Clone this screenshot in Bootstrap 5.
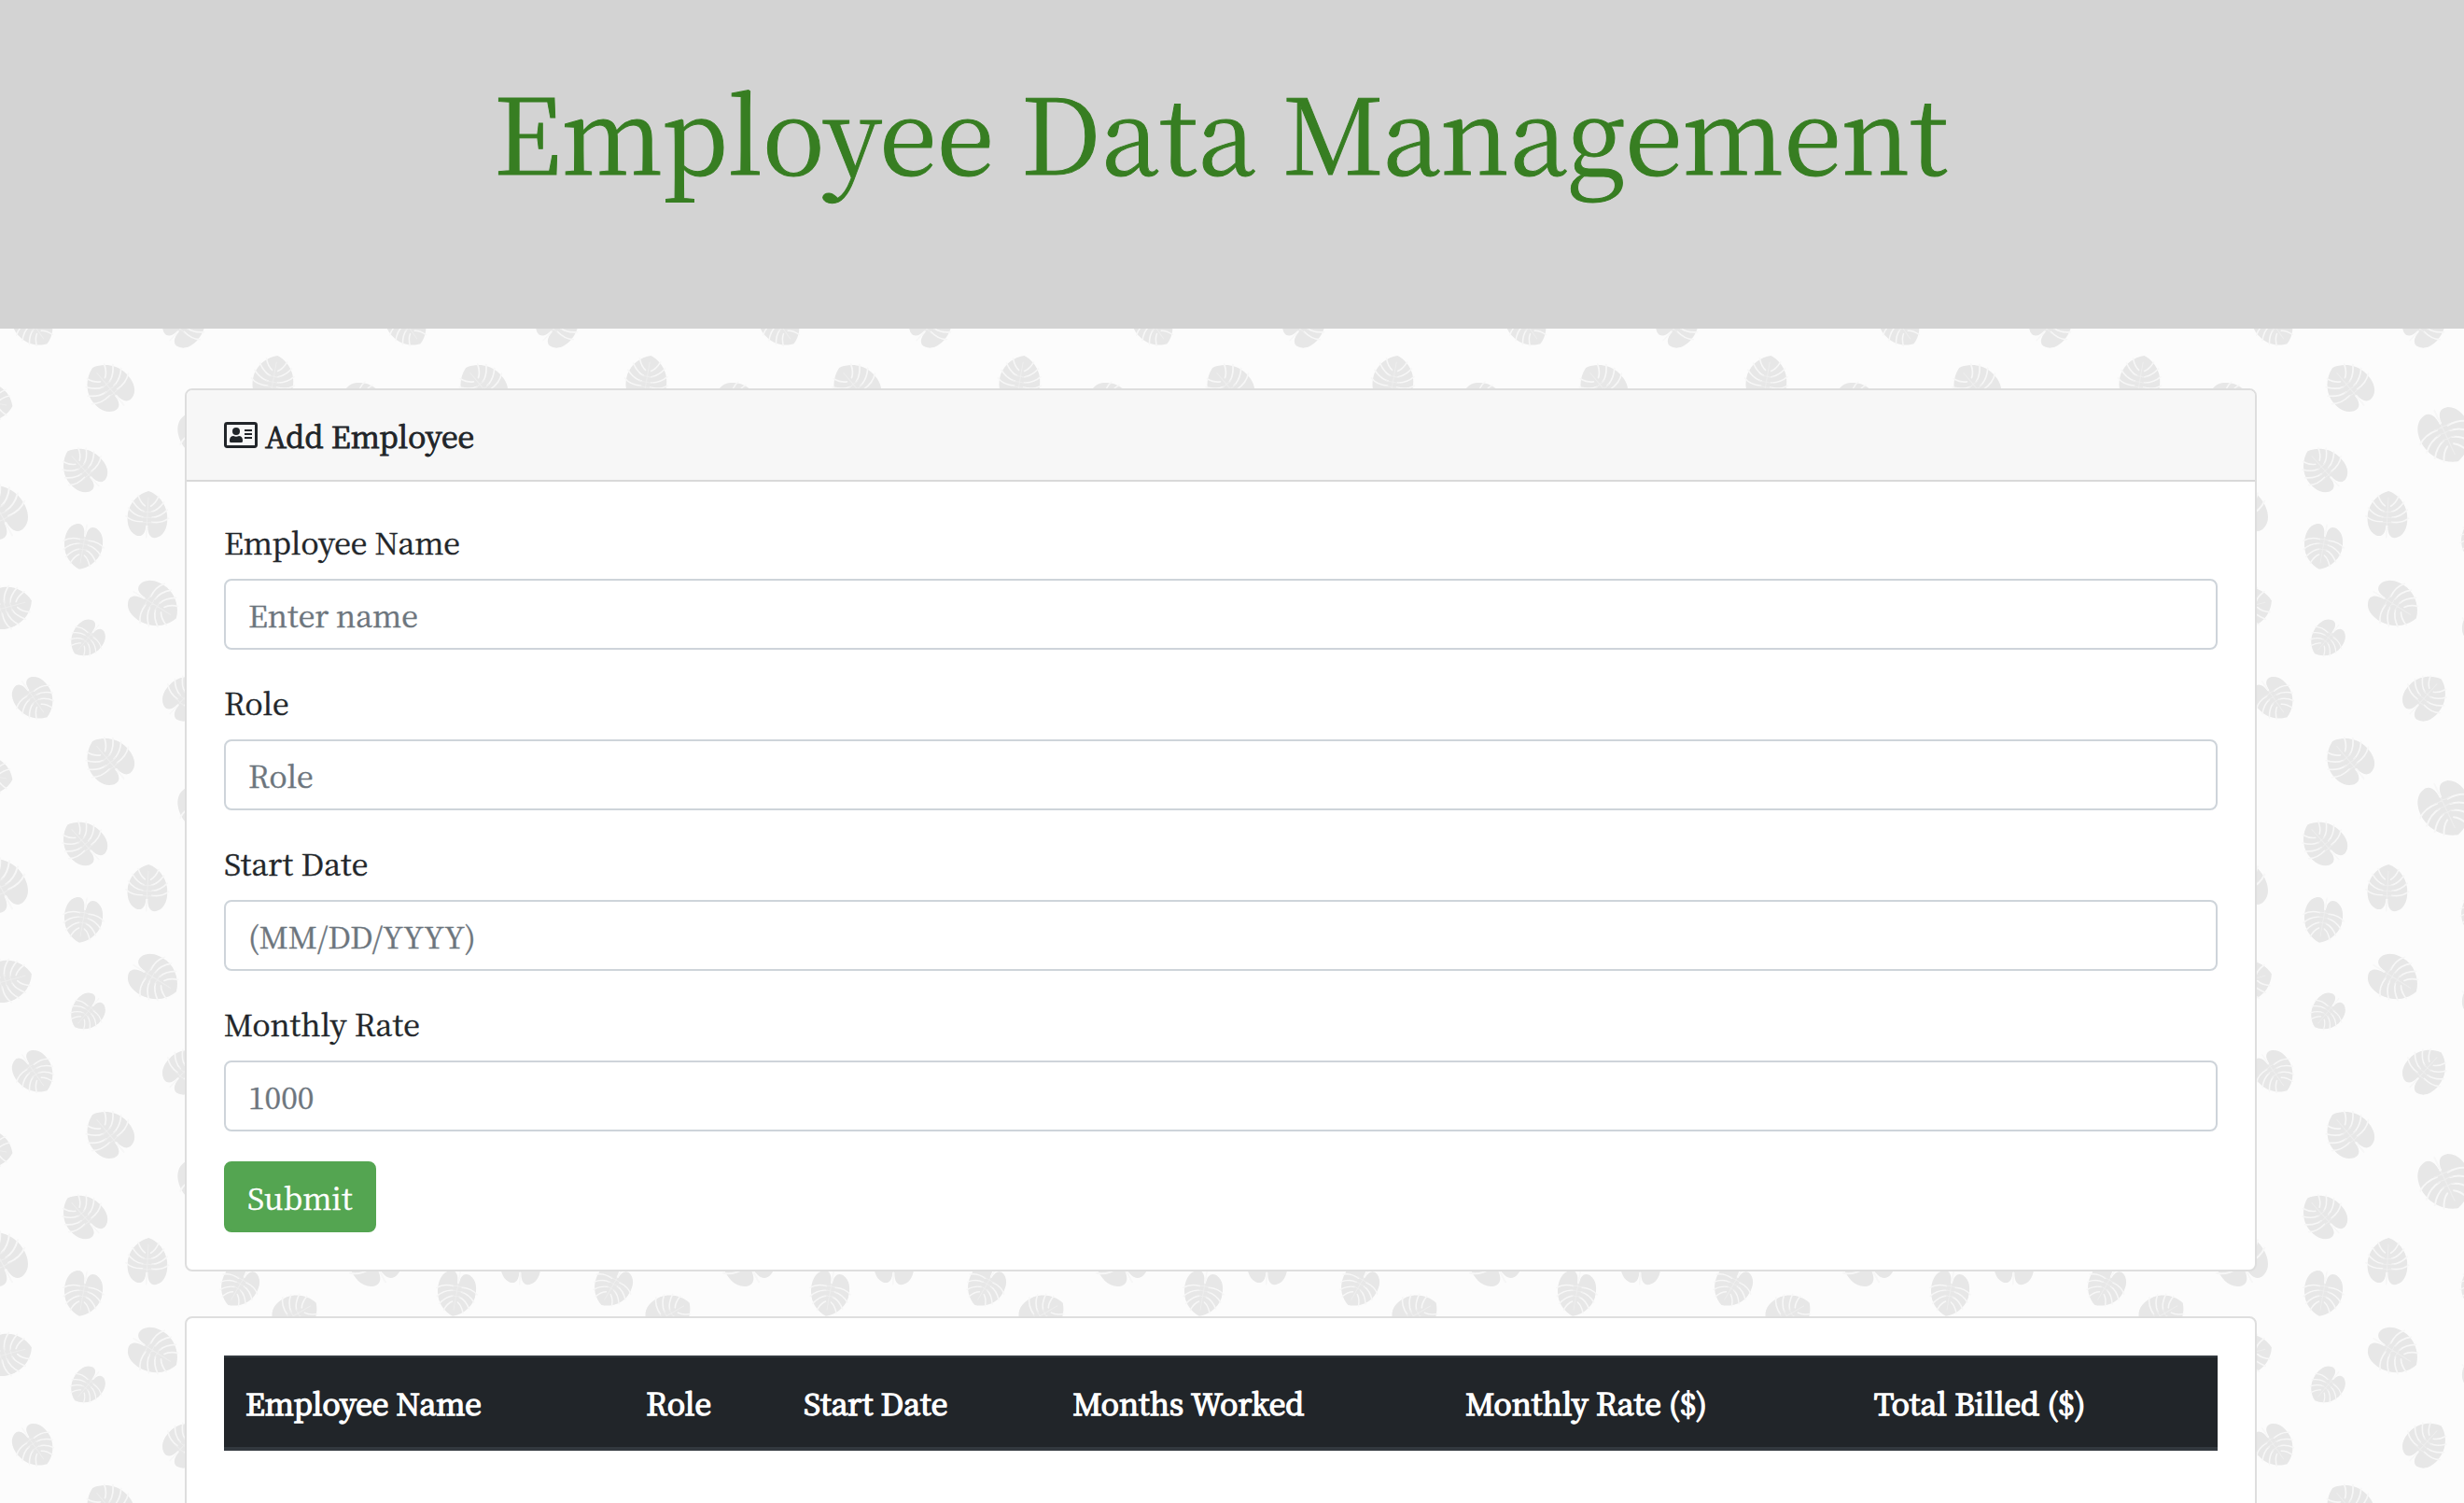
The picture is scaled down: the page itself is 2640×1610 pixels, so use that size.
<!DOCTYPE html>
<html lang="en">
<head>
<meta charset="utf-8">
<meta name="viewport" content="width=device-width, initial-scale=1">
<title>Employee Data Management</title>
<link rel="stylesheet" href="https://cdn.jsdelivr.net/npm/bootstrap@5.3.0/dist/css/bootstrap.min.css">
<style>
  body {
    font-family: "Noto Serif CJK SC", "Noto Serif", "Liberation Serif", serif;
    font-size: 32px;
    line-height: 48px;
    color: #212529;
    -webkit-text-stroke: 0.5px currentColor;
    background: #fcfcfc url("data:image/svg+xml,%3Csvg xmlns='http://www.w3.org/2000/svg' xmlns:xlink='http://www.w3.org/1999/xlink' width='400' height='400' viewBox='0 0 400 400'%3E%3Cdefs%3E%3Cg id='f'%3E%3Cpath fill='%23e7e7e7' d='M0-25C10-22 19-13 21-1C23 10 20 21 12 24C5 27 1 21 1 12L-1 12C-1 21 -5 25 -11 23C-20 19 -22 9 -21-1C-19-13 -10-22 0-25Z'/%3E%3Cg fill='none' stroke='%23f7f7f7' stroke-width='1.6' stroke-linecap='round'%3E%3Cpath d='M0 25V12M5 8Q16 9 23 3M5 3Q14 2 21-6M4-3Q11-5 17-14M3-9Q8-12 11-20M-5 8Q-16 9-23 3M-5 3Q-14 2-21-6M-4-3Q-11-5-17-14M-3-9Q-8-12-11-20'/%3E%3Cpath stroke='%23eeeeee' stroke-width='1' d='M0 11V-18M0 9Q4 8 7 9M0 3Q4 4 7 3M0-3Q3-2 6-3M0 9Q-4 8-7 9M0 3Q-4 4-7 3M0-3Q-3-2-6-3'/%3E%3C/g%3E%3C/g%3E%3C/defs%3E%3Cg id='t'%3E%3Cuse xlink:href='%23f' transform='translate(116 14) rotate(-40) scale(1.1 1.05)'/%3E%3Cuse xlink:href='%23f' transform='translate(116 414) rotate(-40) scale(1.1 1.05)'/%3E%3Cuse xlink:href='%23f' transform='translate(89 102) rotate(-42)'/%3E%3Cuse xlink:href='%23f' transform='translate(158 151) rotate(3)'/%3E%3Cuse xlink:href='%23f' transform='translate(89 186) rotate(190) scale(.96)'/%3E%3Cuse xlink:href='%23f' transform='translate(166 248) rotate(122) scale(1.08)'/%3E%3Cuse xlink:href='%23f' transform='translate(93 285) rotate(220) scale(.8)'/%3E%3Cuse xlink:href='%23f' transform='translate(37 349) rotate(145) scale(.94)'/%3E%3Cuse xlink:href='%23f' transform='translate(199 346) rotate(42)'/%3E%3Cuse xlink:href='%23f' transform='translate(221 67) rotate(155) scale(1.26 1.2)'/%3E%3Cuse xlink:href='%23f' transform='translate(390 31) rotate(100) scale(.95)'/%3E%3Cuse xlink:href='%23f' transform='translate(-10 31) rotate(100) scale(.95)'/%3E%3Cuse xlink:href='%23f' transform='translate(-1 147) rotate(-28) scale(1.26 1.2)'/%3E%3Cuse xlink:href='%23f' transform='translate(399 147) rotate(-28) scale(1.26 1.2)'/%3E%3Cuse xlink:href='%23f' transform='translate(9 250) rotate(75) scale(1.03)'/%3E%3Cuse xlink:href='%23f' transform='translate(409 250) rotate(75) scale(1.03)'/%3E%3Cuse xlink:href='%23f' transform='translate(317 208) rotate(60)'/%3E%3Cuse xlink:href='%23f' transform='translate(256 178) rotate(210) scale(.92)'/%3E%3Cuse xlink:href='%23f' transform='translate(293 6) rotate(10) scale(1.02)'/%3E%3Cuse xlink:href='%23f' transform='translate(293 406) rotate(10) scale(1.02)'/%3E%3Cuse xlink:href='%23f' transform='translate(261 267) rotate(20)'/%3E%3C/g%3E%3C/svg%3E") 0 0 / 400px 400px;
  }
  .page-banner { background: #d3d3d3; padding: 72px 24px 146px 0; margin-bottom: 64px; }
  .page-banner h1 { font-size: 112px; line-height: 134px; font-weight: 400; color: #377e22; margin: 0; -webkit-text-stroke-width: 1px; }
  .page-main { padding: 0 24px 48px 0; }
  .page-column { max-width: 2220px; }
  .panel-card { border: 2px solid #dedede; border-radius: 8px; background: #fff; }
  .panel-card > .card-header { padding: 24px 40px; background: #f7f7f7; border-bottom: 2px solid #d9d9d9; border-radius: 6px 6px 0 0; font-size: 32px; -webkit-text-stroke-width: 1px; }
  .panel-card > .card-body { padding: 40px; }
  .id-icon { width: 36px; height: 28px; }
  .form-label { margin-bottom: 16px; }
  .form-control { font-size: 32px; line-height: 48px; height: 76px; padding: 12px 24px; border: 2px solid #ced4da; border-radius: 8px; }
  .form-control::placeholder { color: #6c757d; }
  .field-group { margin-bottom: 32px; }
  .btn-submit { --bs-btn-color: #fff; --bs-btn-bg: #54a551; --bs-btn-border-color: #54a551; --bs-btn-hover-color: #fff; --bs-btn-hover-bg: #468c43; font-size: 32px; line-height: 48px; padding: 12px 23px; border-width: 2px; border-radius: 8px; }
  .staff-table { --bs-table-bg: #212529; --bs-table-color: #fff; table-layout: fixed; margin-bottom: 32px; }
  .staff-table th { padding: 24px 23px; border-top: 2px solid #32383e; border-bottom: 4px solid #32383e; font-weight: 400; -webkit-text-stroke-width: 1.5px; }
</style>
<script src="https://cdn.jsdelivr.net/npm/bootstrap@5.3.0/dist/js/bootstrap.bundle.min.js"></script>
</head>
<body>
<header class="page-banner text-center">
  <h1>Employee Data Management</h1>
</header>
<main class="page-main">
  <div class="page-column mx-auto">
    <section class="card panel-card mb-5">
      <div class="card-header d-flex align-items-center">
        <svg class="id-icon me-2 flex-shrink-0" viewBox="0 0 36 28" fill="#212529" aria-hidden="true">
          <path fill-rule="evenodd" d="M3.400 0H32.600A3.400 3.400 0 0 1 36 3.400V24.600A3.400 3.400 0 0 1 32.600 28H3.400A3.400 3.400 0 0 1 0 24.600V3.400A3.400 3.400 0 0 1 3.400 0ZM3 3V25H33V3Z"/>
          <circle cx="13" cy="10" r="4"/>
          <path d="M10.200 15C11.800 16 14.200 16 15.800 15C18.500 15 20 17 20 19.500V20.500Q20 22 18.500 22H7.500Q6 22 6 20.500V19.500C6 17 7.500 15 10.200 15Z"/>
          <path d="M22 8H30V10H22ZM22 12H30V14H22ZM22 16H30V18H22Z"/>
        </svg>
        <span>Add Employee</span>
      </div>
      <div class="card-body">
        <form>
          <div class="field-group">
            <label class="form-label d-block" for="employee-name">Employee Name</label>
            <input class="form-control" type="text" id="employee-name" placeholder="Enter name">
          </div>
          <div class="field-group">
            <label class="form-label d-block" for="employee-role">Role</label>
            <input class="form-control" type="text" id="employee-role" placeholder="Role">
          </div>
          <div class="field-group">
            <label class="form-label d-block" for="start-date">Start Date</label>
            <input class="form-control" type="text" id="start-date" placeholder="(MM/DD/YYYY)">
          </div>
          <div class="field-group">
            <label class="form-label d-block" for="monthly-rate">Monthly Rate</label>
            <input class="form-control" type="text" id="monthly-rate" placeholder="1000">
          </div>
          <button class="btn btn-submit d-block" type="submit">Submit</button>
        </form>
      </div>
    </section>
    <section class="card panel-card">
      <div class="card-body">
        <table class="table staff-table">
          <colgroup>
            <col style="width:20.1%"><col style="width:7.9%"><col style="width:13.5%"><col style="width:19.7%"><col style="width:20.5%"><col style="width:18.3%">
          </colgroup>
          <thead>
            <tr>
              <th scope="col">Employee Name</th>
              <th scope="col">Role</th>
              <th scope="col">Start Date</th>
              <th scope="col">Months Worked</th>
              <th scope="col">Monthly Rate ($)</th>
              <th scope="col">Total Billed ($)</th>
            </tr>
          </thead>
          <tbody></tbody>
        </table>
      </div>
    </section>
  </div>
</main>
</body>
</html>
